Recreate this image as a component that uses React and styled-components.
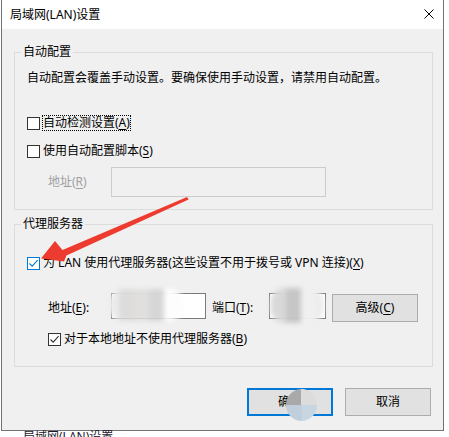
import React from 'react'
import styled, { createGlobalStyle } from 'styled-components'

const GlobalStyle = createGlobalStyle`
  html, body {
    margin: 0;
    padding: 0;
    background: #fff;
  }
  body {
    font-family: 'Noto Sans', 'Noto Sans CJK SC', sans-serif;
    font-size: 12px;
    color: #000;
  }
`

const Page = styled.div`
  position: relative;
  width: 449px;
  height: 437px;
  overflow: hidden;
  background: #fff;
`

const Window = styled.div`
  margin-left: 1px;
  width: 443px;
  box-sizing: border-box;
  border: 1px solid #727272;
  border-top: none;
`

const TitleBar = styled.div`
  height: 29px;
  background: #fff;
  display: flex;
  align-items: center;
  justify-content: space-between;
  padding: 0 9px 0 8px;
  line-height: 16px;
`

const Close = styled.svg`
  width: 10px;
  height: 10px;
  margin-bottom: 2px;
`

const Body = styled.div`
  background: #f0f0f0;
  padding: 15px 10px 14px 12px;
`

const Group = styled.fieldset`
  margin: 0;
  padding: 0;
  min-width: 0;
  border: 1px solid #dcdcdc;
  & + & {
    margin-top: 6px;
  }
`

const Legend = styled.legend`
  margin-left: 6px;
  padding: 0 2px;
  line-height: 16px;
`

const GroupBody = styled.div`
  display: flex;
  flex-direction: column;
  padding: ${p => p.$pad};
`

const Text = styled.div`
  line-height: 16px;
`

const Row = styled.div`
  display: flex;
  align-items: center;
  margin-top: ${p => p.$mt || 0}px;
  padding-left: ${p => p.$indent || 0}px;
  height: ${p => (p.$h ? `${p.$h}px` : 'auto')};
`

const Box = styled.span`
  width: 13px;
  height: 13px;
  box-sizing: border-box;
  border: 1px solid ${p => (p.$active ? '#0078d7' : '#333')};
  background: #fff;
  display: inline-flex;
  align-items: center;
  justify-content: center;
  flex-shrink: 0;
`

const CheckLabel = styled.span`
  margin-left: 2px;
  line-height: 14px;
  border: 1px ${p => (p.$focus ? 'dotted #000' : 'solid transparent')};
  white-space: nowrap;
`

const Key = styled.u`
  text-decoration: underline;
  text-underline-offset: 2px;
`

const FieldLabel = styled.span`
  width: ${p => p.$w}px;
  flex-shrink: 0;
  line-height: 16px;
  color: ${p => (p.$disabled ? '#a0a0a0' : '#000')};
  white-space: nowrap;
`

const Input = styled.div`
  position: relative;
  width: ${p => p.$w}px;
  height: ${p => p.$h}px;
  box-sizing: border-box;
  flex-shrink: 0;
  align-self: flex-start;
  border: 1px solid ${p => (p.$disabled ? '#cccccc' : '#7a7a7a')};
  background: ${p => (p.$disabled ? '#f0f0f0' : '#fff')};
`

const Mosaic = styled.div`
  position: absolute;
  left: ${p => p.$x}px;
  top: ${p => p.$y}px;
  width: ${p => p.$w}px;
  height: ${p => p.$h}px;
  border-radius: 15px;
  background: ${p => p.$bg};
  filter: blur(2.5px);
`

const Spacer = styled.span`
  width: ${p => p.$w}px;
  flex-shrink: 0;
`

const Button = styled.div`
  position: relative;
  width: 86px;
  height: 28px;
  box-sizing: border-box;
  flex-shrink: 0;
  display: flex;
  align-items: center;
  justify-content: center;
  background: #e1e1e1;
  border: ${p => (p.$primary ? '2px solid #0078d7' : '1px solid #adadad')};
  line-height: 16px;
  align-self: ${p => p.$self || 'auto'};
`

const Footer = styled.div`
  display: flex;
  justify-content: flex-end;
  gap: 12px;
  margin-top: 21px;
  padding-right: 2px;
`

const Spinner = styled.div`
  position: absolute;
  left: 37px;
  top: -1px;
  width: 31px;
  height: 32px;
  border-radius: 50%;
  background: conic-gradient(#dcdcdc 0 90deg, #c8d6e2 90deg 180deg, #c0cfdb 180deg 270deg, #a9a9a9 270deg 360deg);
`

const Behind = styled.div`
  margin-left: 23px;
  line-height: 12px;
  color: #1a1a2e;
`

const Arrow = styled.svg`
  position: absolute;
  left: 0;
  top: 0;
  pointer-events: none;
`

function Check({ checked, active }) {
  return (
    <Box $active={active}>
      {checked && (
        <svg width="11" height="11" viewBox="0 0 11 11">
          <polyline
            points="1.5,5.5 4.2,8.2 9.6,2.2"
            fill="none"
            stroke={active ? '#0078d7' : '#333'}
            strokeWidth="1.1"
          />
        </svg>
      )}
    </Box>
  )
}

export default function App() {
  return (
    <Page>
      <GlobalStyle />
      <Window>
        <TitleBar>
          <span>局域网(LAN)设置</span>
          <Close viewBox="0 0 10 10">
            <path d="M0.5 0.5 L9.5 9.5 M9.5 0.5 L0.5 9.5" stroke="#000" strokeWidth="1" />
          </Close>
        </TitleBar>
        <Body>
          <Group>
            <Legend>自动配置</Legend>
            <GroupBody $pad="10px 0 12px 12px">
              <Text>自动配置会覆盖手动设置。要确保使用手动设置，请禁用自动配置。</Text>
              <Row $mt={29}>
                <Check />
                <CheckLabel $focus>自动检测设置(<Key>A</Key>)</CheckLabel>
              </Row>
              <Row $mt={12}>
                <Check />
                <CheckLabel>使用自动配置脚本(<Key>S</Key>)</CheckLabel>
              </Row>
              <Row $mt={8} $indent={21}>
                <FieldLabel $w={63} $disabled>地址(<Key>R</Key>)</FieldLabel>
                <Input $w={215} $h={30} $disabled />
              </Row>
            </GroupBody>
          </Group>
          <Group>
            <Legend>代理服务器</Legend>
            <GroupBody $pad="23px 0 19px 12px">
              <Row>
                <Check checked active />
                <CheckLabel>为 LAN 使用代理服务器(这些设置不用于拨号或 VPN 连接)(<Key>X</Key>)</CheckLabel>
              </Row>
              <Row $mt={22} $indent={21} $h={29}>
                <FieldLabel $w={63}>地址(<Key>E</Key>):</FieldLabel>
                <Input $w={95} $h={26}>
                  <Mosaic
                    $x={-4}
                    $y={-5}
                    $w={76}
                    $h={32}
                    $bg="linear-gradient(to right, #ececec 0 11px, #dcdcdc 11px 26px, #e0dfde 26px 41px, #d6d6d6 41px 56px, #fdfdfd 56px 76px)"
                  />
                </Input>
                <Spacer $w={6} />
                <FieldLabel $w={57}>端口(<Key>T</Key>):</FieldLabel>
                <Input $w={57} $h={26}>
                  <Mosaic
                    $x={0}
                    $y={-6}
                    $w={54}
                    $h={35}
                    $bg="linear-gradient(to right, #e4e4e4 0 2px, #d9d9d9 2px 16px, #c6c6c6 16px 31px, #f0f0f0 31px 46px, #ececec 46px 54px)"
                  />
                </Input>
                <Spacer $w={6} />
                <Button $self="flex-end">高级(<Key>C</Key>)</Button>
              </Row>
              <Row $mt={9} $indent={21}>
                <Check checked />
                <CheckLabel>对于本地地址不使用代理服务器(<Key>B</Key>)</CheckLabel>
              </Row>
            </GroupBody>
          </Group>
          <Footer>
            <Button $primary>
              确定
              <Spinner />
            </Button>
            <Button>取消</Button>
          </Footer>
        </Body>
      </Window>
      <Behind>局域网(LAN)设置</Behind>
      <Arrow width="449" height="437" viewBox="0 0 449 437">
        <polygon
          points="187,197 188.6,199.4 66.5,255.5 64,261.5 41,258.5 55,241 62.5,250"
          fill="#ee3b2f"
        />
      </Arrow>
    </Page>
  )
}
